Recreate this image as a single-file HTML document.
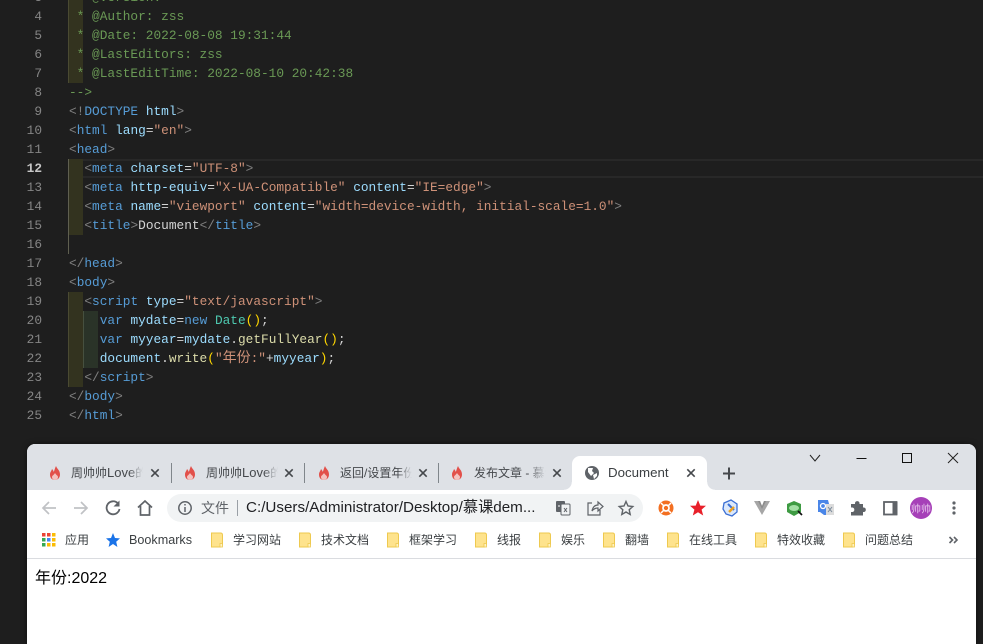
<!DOCTYPE html>
<html lang="zh">
<head>
<meta charset="utf-8">
<title>Document</title>
<style>
html,body{margin:0;padding:0;width:983px;height:641px;overflow:hidden;background:#1e1e1e}
*{box-sizing:border-box}
.a{position:absolute}
#code .l{position:absolute;left:69px;height:19px;line-height:19px;white-space:pre;font-family:"Liberation Mono",monospace;font-size:12.8px;color:#d4d4d4}
#code .n{position:absolute;left:20px;width:22px;text-align:right;height:19px;line-height:19px;font-family:"Liberation Mono",monospace;font-size:12.8px;color:#858585}
#code .c{color:#6a9955}
.t{color:#569cd6}.b{color:#808080}.at{color:#9cdcfe}.s{color:#ce9178}.f{color:#dcdcaa}.k{color:#4ec9b0}.p{color:#ffd700}
.cj{font-family:"Noto Sans CJK SC",sans-serif;font-size:14px;line-height:14px;display:inline-block;width:14px;text-align:center}
#win{position:absolute;left:27px;top:444px;width:949px;height:200px;background:#fff;border-radius:8px 8px 0 0;overflow:hidden;box-shadow:0 0 6px rgba(0,0,0,.5)}
.ui{position:absolute;font-family:"Liberation Sans","Noto Sans CJK SC",sans-serif;white-space:nowrap;color:#3c4043}
.tab{font-size:12px;height:16px;line-height:16px;top:465px;overflow:hidden;color:#45484c}
.sep{position:absolute;top:463px;width:1px;height:20px;background:#80868b}
.bm{font-size:12px;height:16px;line-height:16px;top:532px;color:#3c4043}
svg{position:absolute;overflow:visible}
</style>
</head>
<body>
<div id="code">
<div class="a" style="left:68px;top:0;width:15px;height:83px;background:#33331f;border-left:1px solid #4a4a32"></div>
<div class="a" style="left:68px;top:159px;width:1px;height:95px;background:#5f5f50"></div>
<div class="a" style="left:69px;top:159px;width:14px;height:76px;background:#33331f"></div>
<div class="a" style="left:68px;top:292px;width:15px;height:95px;background:#33331f;border-left:1px solid #4a4a32"></div>
<div class="a" style="left:83px;top:311px;width:15px;height:57px;background:#2a3328;border-left:1px solid #46503f"></div>
<div class="a" style="left:83px;top:159px;width:900px;height:19px;border-top:2px solid #282828;border-bottom:2px solid #282828"></div>

<div class="n" style="top:-12px">3</div><div class="l c" style="top:-12px"> * @version:</div>
<div class="n" style="top:7px">4</div><div class="l c" style="top:7px"> * @Author: zss</div>
<div class="n" style="top:26px">5</div><div class="l c" style="top:26px"> * @Date: 2022-08-08 19:31:44</div>
<div class="n" style="top:45px">6</div><div class="l c" style="top:45px"> * @LastEditors: zss</div>
<div class="n" style="top:64px">7</div><div class="l c" style="top:64px"> * @LastEditTime: 2022-08-10 20:42:38</div>
<div class="n" style="top:83px">8</div><div class="l c" style="top:83px">--&gt;</div>
<div class="n" style="top:102px">9</div><div class="l" style="top:102px"><span class="b">&lt;!</span><span class="t">DOCTYPE</span> <span class="at">html</span><span class="b">&gt;</span></div>
<div class="n" style="top:121px">10</div><div class="l" style="top:121px"><span class="b">&lt;</span><span class="t">html</span> <span class="at">lang</span>=<span class="s">"en"</span><span class="b">&gt;</span></div>
<div class="n" style="top:140px">11</div><div class="l" style="top:140px"><span class="b">&lt;</span><span class="t">head</span><span class="b">&gt;</span></div>
<div class="n" style="top:159px;color:#c6c6c6;font-weight:bold">12</div><div class="l" style="top:159px">  <span class="b">&lt;</span><span class="t">meta</span> <span class="at">charset</span>=<span class="s">"UTF-8"</span><span class="b">&gt;</span></div>
<div class="n" style="top:178px">13</div><div class="l" style="top:178px">  <span class="b">&lt;</span><span class="t">meta</span> <span class="at">http-equiv</span>=<span class="s">"X-UA-Compatible"</span> <span class="at">content</span>=<span class="s">"IE=edge"</span><span class="b">&gt;</span></div>
<div class="n" style="top:197px">14</div><div class="l" style="top:197px">  <span class="b">&lt;</span><span class="t">meta</span> <span class="at">name</span>=<span class="s">"viewport"</span> <span class="at">content</span>=<span class="s">"width=device-width, initial-scale=1.0"</span><span class="b">&gt;</span></div>
<div class="n" style="top:216px">15</div><div class="l" style="top:216px">  <span class="b">&lt;</span><span class="t">title</span><span class="b">&gt;</span>Document<span class="b">&lt;/</span><span class="t">title</span><span class="b">&gt;</span></div>
<div class="n" style="top:235px">16</div>
<div class="n" style="top:254px">17</div><div class="l" style="top:254px"><span class="b">&lt;/</span><span class="t">head</span><span class="b">&gt;</span></div>
<div class="n" style="top:273px">18</div><div class="l" style="top:273px"><span class="b">&lt;</span><span class="t">body</span><span class="b">&gt;</span></div>
<div class="n" style="top:292px">19</div><div class="l" style="top:292px">  <span class="b">&lt;</span><span class="t">script</span> <span class="at">type</span>=<span class="s">"text/javascript"</span><span class="b">&gt;</span></div>
<div class="n" style="top:311px">20</div><div class="l" style="top:311px">    <span class="t">var</span> <span class="at">mydate</span>=<span class="t">new</span> <span class="k">Date</span><span class="p">()</span>;</div>
<div class="n" style="top:330px">21</div><div class="l" style="top:330px">    <span class="t">var</span> <span class="at">myyear</span>=<span class="at">mydate</span>.<span class="f">getFullYear</span><span class="p">()</span>;</div>
<div class="n" style="top:349px">22</div><div class="l" style="top:349px">    <span class="at">document</span>.<span class="f">write</span><span class="p">(</span><span class="s">"<span class="cj">年</span><span class="cj">份</span>:"</span>+<span class="at">myyear</span><span class="p">)</span>;</div>
<div class="n" style="top:368px">23</div><div class="l" style="top:368px">  <span class="b">&lt;/</span><span class="t">script</span><span class="b">&gt;</span></div>
<div class="n" style="top:387px">24</div><div class="l" style="top:387px"><span class="b">&lt;/</span><span class="t">body</span><span class="b">&gt;</span></div>
<div class="n" style="top:406px">25</div><div class="l" style="top:406px"><span class="b">&lt;/</span><span class="t">html</span><span class="b">&gt;</span></div>
</div>

<div id="win">
<div class="a" style="left:0;top:0;width:949px;height:46px;background:#dee1e6"></div>
<div class="a" style="left:0;top:114px;width:949px;height:1px;background:#dadce0"></div>
<div class="a" style="left:545px;top:12px;width:135px;height:34px;background:#fff;border-radius:8px 8px 0 0"></div>
<div class="a" style="left:537px;top:38px;width:8px;height:8px;background:radial-gradient(circle at 0 0,#dee1e6 7.5px,#fff 8px)"></div>
<div class="a" style="left:680px;top:38px;width:8px;height:8px;background:radial-gradient(circle at 100% 0,#dee1e6 7.5px,#fff 8px)"></div>
<div class="a" style="left:140px;top:50px;width:476px;height:28px;background:#f1f3f4;border-radius:14px"></div>
</div>

<svg style="left:0;top:0" width="983" height="641" viewBox="0 0 983 641">
<defs>
<g id="flame"><path d="M1 -7 C2 -4 5 -3 5 1.500 C5 5 2.500 7 0 7 C-3 7 -5 5 -5 1.500 C-5 -1 -3.500 -2 -3 -4 C-2 -3 -1.500 -2 -1.200 -1 C-0.500 -3 0 -5 1 -7Z" fill="#e2504a"/><path d="M0 7 C-2 7 -3 5.500 -3 4 C-3 2.500 -1 2 0 0 C1 2 3 2.500 3 4 C3 5.500 2 7 0 7Z" fill="#f3c3c0"/></g>
<g id="x"><path d="M-3.700 -3.700 L3.700 3.700 M3.700 -3.700 L-3.700 3.700" stroke="#45484c" stroke-width="1.600" fill="none"/></g>
<g id="fold"><path d="M-5.500 -7 H3.500 Q5.500 -7 5.500 -5 V5 L3.500 7 H-5.500 Z" fill="#fee38d" stroke="#eec94f" stroke-width="1"/><rect x="3" y="3.500" width="2.500" height="3.500" fill="#fff3c4" stroke="#eec94f" stroke-width=".8"/></g>
</defs>
<use href="#flame" x="55" y="473"/><use href="#x" x="155" y="473"/>
<use href="#flame" x="190" y="473"/><use href="#x" x="289" y="473"/>
<use href="#flame" x="324" y="473"/><use href="#x" x="423" y="473"/>
<use href="#flame" x="457" y="473"/><use href="#x" x="557" y="473"/>
<circle cx="592" cy="473" r="7" fill="#5f6368"/>
<path d="M588 468 L593 468 L592 471 L594 473 L591 476 L588 472Z M593 475 L597 473 L597 476 L594 479Z" fill="#fff"/>
<use href="#x" x="691" y="473"/>
<path d="M729 467.500 V479.500 M723 473.500 H735" stroke="#45484c" stroke-width="2" fill="none"/>
<path d="M810 455 L815 461 L820 455" stroke="#222" stroke-width="1" fill="none"/>
<path d="M856.500 458.500 H866.500" stroke="#111" stroke-width="1" fill="none"/>
<rect x="902.500" y="453.500" width="9" height="9" stroke="#111" fill="none"/>
<path d="M948 453 L958 463 M958 453 L948 463" stroke="#222" stroke-width="1" fill="none"/>
<path d="M56 508 H43 M49 502 L43 508 L49 514" stroke="#c0c2c5" stroke-width="1.700" fill="none"/>
<path d="M74 508 H87 M81 502 L87 508 L81 514" stroke="#c0c2c5" stroke-width="1.700" fill="none"/>
<path d="M118 503.500 A6.500 6.500 0 1 0 119.500 509" stroke="#5f6368" stroke-width="1.800" fill="none"/><path d="M119.500 500.500 V506.500 H113.500Z" fill="#5f6368"/>
<path d="M138 507.500 L145 501 L152 507.500 M140.500 506 V515 H149.500 V506" stroke="#5f6368" stroke-width="1.700" fill="none"/>
<circle cx="185" cy="508" r="6.200" stroke="#5f6368" stroke-width="1.500" fill="none"/><path d="M185 507 V512 M185 504 V505.500" stroke="#5f6368" stroke-width="1.500"/>
<rect x="237" y="500" width="1" height="16" fill="#9aa0a6"/>
<rect x="556" y="501" width="9" height="11" rx="1" fill="#5f6368"/><rect x="561" y="504" width="9" height="11" rx="1" fill="#f1f3f4" stroke="#5f6368"/>
<path d="M564 508 l3 4 M567 508 l-3 4" stroke="#5f6368" stroke-width="1" fill="none"/><path d="M558 506 h2" stroke="#fff" stroke-width="1"/>
<path d="M592 503 H588 V515 H600 V510" stroke="#5f6368" stroke-width="1.200" fill="none"/>
<path d="M592 511 C593 506 596 505 598 505 V502 L603 506.500 L598 511 V508 C595 508 593.500 509 592 511Z" stroke="#5f6368" stroke-width="1.200" fill="none"/>
<path d="M626 501.500 L628 506 L632.800 506.500 L629.200 509.700 L630.200 514.500 L626 512 L621.800 514.500 L622.800 509.700 L619.200 506.500 L624 506Z" stroke="#5f6368" stroke-width="1.400" fill="none"/>
<circle cx="666" cy="508" r="7.500" fill="#f36f21"/><circle cx="666" cy="508" r="3" fill="none" stroke="#fff" stroke-width="1.700"/><path d="M661 503 L664 506 M671 503 L668 506 M661 513 L664 510 M671 513 L668 510" stroke="#fff" stroke-width="1.500"/>
<path d="M698 500 L700.300 505.600 L706 505.800 L701.600 509.600 L703.200 515.500 L698 512.200 L692.800 515.500 L694.400 509.600 L690 505.800 L695.700 505.600Z" fill="#e8202a"/>
<path d="M724 503 L731 500 L737 504 L737 512 L732 516 L726 514 L723 509Z" fill="#dbe8fb" stroke="#3b6fd4" stroke-width="1.300"/><path d="M728 504 L734 510" stroke="#3b6fd4" stroke-width="2"/><path d="M729 512 L734 507" stroke="#eea321" stroke-width="2.400"/>
<path d="M754 501 H760 L762 506 L764 501 H770 L762 515Z" fill="#a6a6a6"/><path d="M758 501 H760 L762 506 L764 501 H766 L762 509Z" fill="#8c8c8c"/>
<path d="M794 501 L801 504 V512 L794 516 L787 512 V504Z" fill="#3e9b43"/><ellipse cx="794" cy="508" rx="5" ry="3" fill="#a3dfa5"/><path d="M798 511 L802 515" stroke="#111" stroke-width="1.700"/>
<path d="M818 500 H828 L832 515 H824 L820 512 H818Z" fill="#4a86e8"/><rect x="826" y="504" width="8" height="11" fill="#dcdcdc"/><path d="M828 507 L832 512 M832 507 L828 512" stroke="#7a8a9a" stroke-width="1"/><circle cx="823" cy="506" r="2.500" fill="none" stroke="#fff" stroke-width="1.300"/>
<path d="M851 504 H855 V503 A2.300 2.300 0 0 1 859.500 503 V504 H863 V507.500 H864 A2.300 2.300 0 0 1 864 512 H863 V515.500 H851 V512 H852.500 A2.300 2.300 0 0 0 852.500 507.500 H851Z" fill="#5f6368"/>
<rect x="884" y="502" width="12.500" height="12.500" fill="none" stroke="#5f6368" stroke-width="1.800"/><rect x="892.500" y="502" width="5" height="13" fill="#5f6368"/>
<circle cx="921" cy="508" r="11" fill="#a640b8"/>
<circle cx="954" cy="503" r="1.600" fill="#5f6368"/><circle cx="954" cy="508" r="1.600" fill="#5f6368"/><circle cx="954" cy="513" r="1.600" fill="#5f6368"/>
<g>
<rect x="42" y="533" width="3.500" height="3.500" fill="#ea4335"/><rect x="47" y="533" width="3.500" height="3.500" fill="#ea4335"/><rect x="52" y="533" width="3.500" height="3.500" fill="#fbbc04"/>
<rect x="42" y="538" width="3.500" height="3.500" fill="#34a853"/><rect x="47" y="538" width="3.500" height="3.500" fill="#4285f4"/><rect x="52" y="538" width="3.500" height="3.500" fill="#fbbc04"/>
<rect x="42" y="543" width="3.500" height="3.500" fill="#34a853"/><rect x="47" y="543" width="3.500" height="3.500" fill="#fbbc04"/><rect x="52" y="543" width="3.500" height="3.500" fill="#fbbc04"/>
</g>
<path d="M113 533 L115 538 L120 538.400 L116.200 541.700 L117.400 547 L113 544 L108.600 547 L109.800 541.700 L106 538.400 L111 538Z" fill="#1a73e8"/>
<use href="#fold" x="217" y="540"/><use href="#fold" x="305" y="540"/><use href="#fold" x="393" y="540"/><use href="#fold" x="481" y="540"/><use href="#fold" x="545" y="540"/><use href="#fold" x="609" y="540"/><use href="#fold" x="673" y="540"/><use href="#fold" x="761" y="540"/><use href="#fold" x="849" y="540"/>
<path d="M949.500 537 L952.500 540 L949.500 543 M954 537 L957 540 L954 543" stroke="#5f6368" stroke-width="1.600" fill="none"/>
</svg>

<div class="sep" style="left:171px"></div>
<div class="sep" style="left:304px"></div>
<div class="sep" style="left:438px"></div>

<div class="ui tab" style="left:71px;width:72px;-webkit-mask-image:linear-gradient(90deg,#000 80%,transparent)">周帅帅<span style="font-size:13px">Love</span>的博客</div>
<div class="ui tab" style="left:206px;width:72px;-webkit-mask-image:linear-gradient(90deg,#000 80%,transparent)">周帅帅<span style="font-size:13px">Love</span>的博客</div>
<div class="ui tab" style="left:340px;width:72px;-webkit-mask-image:linear-gradient(90deg,#000 80%,transparent)">返回/设置年份</div>
<div class="ui tab" style="left:474px;width:72px;-webkit-mask-image:linear-gradient(90deg,#000 75%,transparent)">发布文章 - 慕课网</div>
<div class="ui tab" style="left:608px;font-size:13.3px;color:#3c4043">Document</div>

<div class="ui" style="left:201px;top:500px;font-size:14px;line-height:16px;color:#5f6368">文件</div>
<div class="ui" style="left:246px;top:499px;font-size:15.2px;line-height:17px;color:#202124">C:/Users/Administrator/Desktop/慕课dem...</div>
<div class="ui" style="left:921px;top:508px;transform:translate(-50%,-50%);font-size:10px;color:#e8c8ee">帅帅</div>

<div class="ui bm" style="left:65px">应用</div>
<div class="ui bm" style="left:129px;font-size:12.6px">Bookmarks</div>
<div class="ui bm" style="left:233px">学习网站</div>
<div class="ui bm" style="left:321px">技术文档</div>
<div class="ui bm" style="left:409px">框架学习</div>
<div class="ui bm" style="left:497px">线报</div>
<div class="ui bm" style="left:561px">娱乐</div>
<div class="ui bm" style="left:625px">翻墙</div>
<div class="ui bm" style="left:689px">在线工具</div>
<div class="ui bm" style="left:777px">特效收藏</div>
<div class="ui bm" style="left:865px">问题总结</div>

<div class="ui" style="left:35px;top:569px;font-size:16px;line-height:19px;color:#000">年份:2022</div>
</body>
</html>
